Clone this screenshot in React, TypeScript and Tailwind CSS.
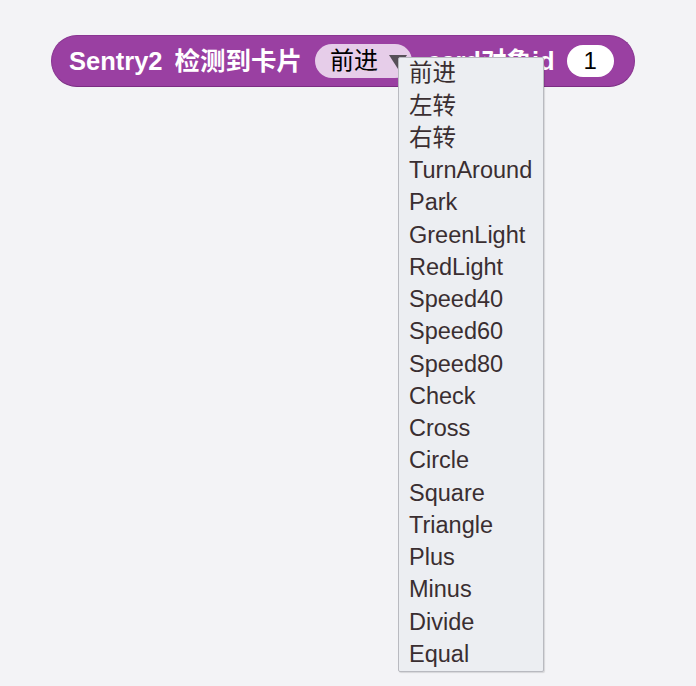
import type { ReactNode } from 'react'

const items = [
  '前进',
  '左转',
  '右转',
  'TurnAround',
  'Park',
  'GreenLight',
  'RedLight',
  'Speed40',
  'Speed60',
  'Speed80',
  'Check',
  'Cross',
  'Circle',
  'Square',
  'Triangle',
  'Plus',
  'Minus',
  'Divide',
  'Equal',
]

const font = {
  fontFamily: '"Liberation Sans", Arial, "Noto Sans CJK SC", sans-serif',
}

export default function App(): ReactNode {
  return (
    <div className="relative w-[696px] h-[686px] bg-[#f3f3f6]" style={font}>
      <div className="pt-[35px] pl-[51px]">
        <div className="inline-flex items-center h-[52px] pl-[17px] pr-[20px] rounded-full bg-[#9a40a2] border border-[#8a3592] border-b-[#7b2d83]">
          <span className="text-white font-bold text-[25.5px]">Sentry2</span>
          <span className="ml-[12px] text-white font-bold text-[25.5px]">检测到卡片</span>
          <div className="ml-[13px] flex items-center h-[34px] w-[97px] pl-[15px] rounded-full bg-[#e6cde9]">
            <span className="text-black text-[24px] leading-none">前进</span>
            <svg width="20" height="16" viewBox="0 0 20 16" className="ml-[10px] mt-[2px]">
              <path d="M1 1 L19 1 L10 15 Z" fill="#575058" />
            </svg>
          </div>
          <span className="ml-[15px] text-white font-bold text-[25.5px]">card对象id</span>
          <div className="ml-[12px] flex items-center justify-center h-[32px] w-[47px] rounded-full bg-white">
            <span className="text-black text-[24px] leading-none">1</span>
          </div>
        </div>
      </div>

      <div className="absolute left-[398px] top-[57px] w-[146px] bg-[#eceef2] border border-[#b9bac0] rounded-[2px] shadow-[1px_1px_1px_rgba(0,0,0,0.12)]">
        {items.map((item) => (
          <div
            key={item}
            className="h-[32.25px] flex items-center pl-[10px] text-[23.5px] text-[#3a2e31] leading-none"
          >
            {item}
          </div>
        ))}
      </div>
    </div>
  )
}
